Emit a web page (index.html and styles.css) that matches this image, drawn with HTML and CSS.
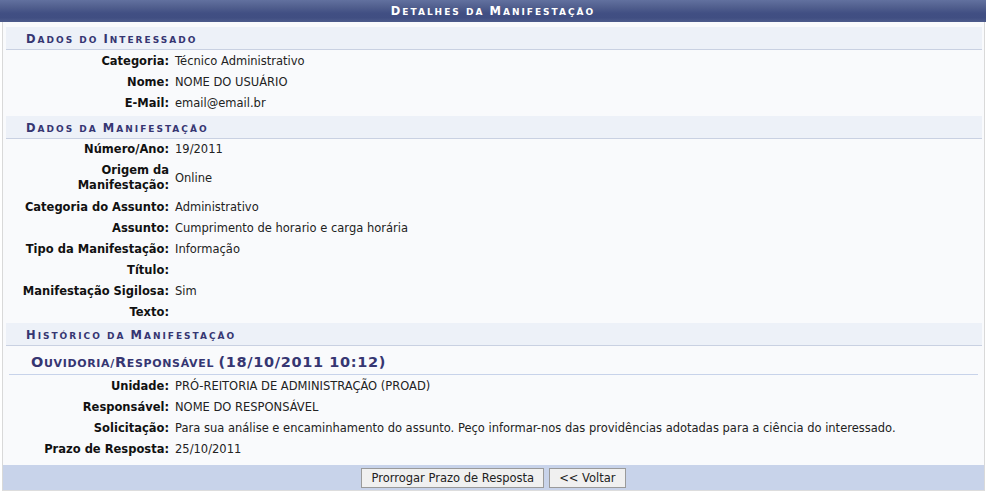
FILE: index.html
```html
<!DOCTYPE html>
<html lang="pt-BR">
<head>
<meta charset="utf-8">
<title>Detalhes da Manifestação</title>
<link rel="stylesheet" href="styles.css">
</head>
<body>
<div class="panel">
  <div class="panel-title"><span class="ini">D</span>etalhes da <span class="ini">M</span>anifestação</div>
  <div class="panel-body">
    <div class="section-title"><span class="ini">D</span>ados do <span class="ini">I</span>nteressado</div>
    <div class="fields fields-first">
      <div class="label">Categoria:</div><div class="value">Técnico Administrativo</div>
      <div class="label">Nome:</div><div class="value">NOME DO USUÁRIO</div>
      <div class="label">E-Mail:</div><div class="value">email@email.br</div>
    </div>

    <div class="section-title"><span class="ini">D</span>ados da <span class="ini">M</span>anifestação</div>
    <div class="fields fields-tight">
      <div class="label">Número/Ano:</div><div class="value">19/2011</div>
      <div class="label tall">Origem da<br>Manifestação:</div><div class="value tall">Online</div>
      <div class="label">Categoria do Assunto:</div><div class="value">Administrativo</div>
      <div class="label">Assunto:</div><div class="value">Cumprimento de horario e carga horária</div>
      <div class="label">Tipo da Manifestação:</div><div class="value">Informação</div>
      <div class="label">Título:</div><div class="value"></div>
      <div class="label">Manifestação Sigilosa:</div><div class="value">Sim</div>
      <div class="label">Texto:</div><div class="value"></div>
    </div>

    <div class="section-title"><span class="ini">H</span>istórico da <span class="ini">M</span>anifestação</div>
    <div class="sub-title"><span class="ini">O</span>uvidoria/<span class="ini">R</span>esponsável <span class="ini">(18/10/2011 10:12)</span></div>
    <div class="fields">
      <div class="label">Unidade:</div><div class="value">PRÓ-REITORIA DE ADMINISTRAÇÃO (PROAD)</div>
      <div class="label">Responsável:</div><div class="value">NOME DO RESPONSÁVEL</div>
      <div class="label">Solicitação:</div><div class="value">Para sua análise e encaminhamento do assunto. Peço informar-nos das providências adotadas para a ciência do interessado.</div>
      <div class="label">Prazo de Resposta:</div><div class="value">25/10/2011</div>
    </div>

    <div class="actions">
      <button class="btn" type="button">Prorrogar Prazo de Resposta</button>
      <button class="btn" type="button">&lt;&lt; Voltar</button>
    </div>
  </div>
</div>
</body>
</html>
```

FILE: styles.css
```css
html, body {
  margin: 0;
  padding: 0;
  background: #ffffff;
}

body {
  font-family: "DejaVu Sans", Verdana, sans-serif;
  font-size: 11.5px;
  color: #222222;
}

.panel {
  width: 986px;
}

.panel-title {
  height: 22px;
  line-height: 23px;
  text-align: center;
  color: #ffffff;
  font-weight: bold;
  text-transform: uppercase;
  letter-spacing: 2px;
  font-size: 9px;
  background: linear-gradient(#62719f 0%, #52608f 30%, #414f83 60%, #404e82 80%, #4d5b8b 100%);
}

.ini {
  font-size: 11.5px;
}

.panel-body {
  margin: 0 1px 0 2px;
  border-left: 1px solid #d9d9d9;
  border-right: 1px solid #d9d9d9;
  border-bottom: 1px solid #dddddd;
  background: #f9fafc;
  padding-top: 5px;
}

.section-title {
  margin: 0 2px 0 3px;
  height: 22px;
  line-height: 24px;
  padding-left: 20px;
  background: #edf1f8;
  border-bottom: 1px solid #c9d1e2;
  color: #363672;
  font-weight: bold;
  text-transform: uppercase;
  letter-spacing: 2px;
  font-size: 9px;
}

.fields {
  display: grid;
  grid-template-columns: 166px 1fr;
  padding: 1px 0 0;
}

.fields-first {
  padding-bottom: 2px;
}

.fields-tight {
  padding-top: 0;
}

.label,
.value {
  padding-top: 3px;
  padding-bottom: 3px;
  line-height: 15px;
  display: flex;
  align-items: center;
}

.label.tall,
.value.tall {
  padding-bottom: 4px;
}

.label {
  justify-content: flex-end;
  text-align: right;
  font-weight: bold;
  color: #111111;
}

.value {
  padding-left: 6px;
}

.sub-title {
  margin: 0 6px 0 6px;
  height: 22px;
  padding: 6px 0 0 22px;
  line-height: 21px;
  border-bottom: 1px solid #c8d3ea;
  color: #363672;
  font-weight: bold;
  text-transform: uppercase;
  letter-spacing: 0.65px;
  font-size: 11px;
}

.sub-title .ini {
  font-size: 14.5px;
  line-height: 21px;
}

.actions {
  margin-top: 5px;
  height: 25px;
  background: #c8d3ea;
  display: flex;
  justify-content: center;
  align-items: center;
  gap: 5px;
}

.btn {
  font-family: "DejaVu Sans", Verdana, sans-serif;
  font-size: 11.5px;
  color: #222222;
  height: 20px;
  padding: 0 9px;
  background: #f0f0f0;
  border: 1px solid #9a9a9a;
  border-radius: 0;
}
```
